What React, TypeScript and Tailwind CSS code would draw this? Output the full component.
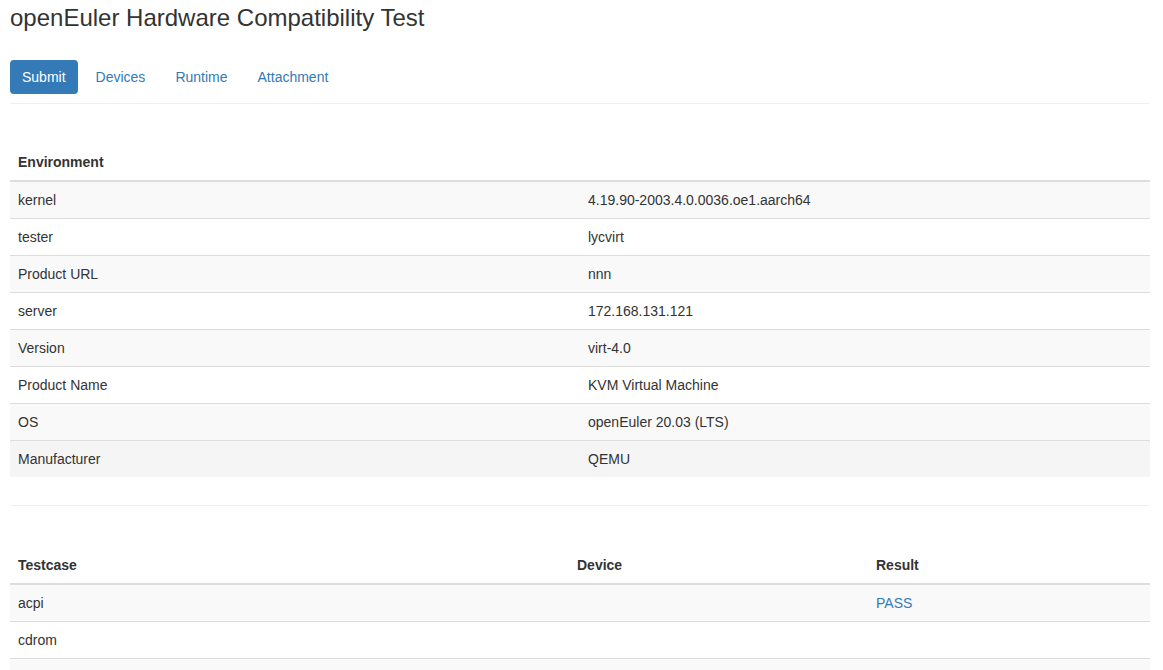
import React from "react";

const env: [string, string][] = [
  ["kernel", "4.19.90-2003.4.0.0036.oe1.aarch64"],
  ["tester", "lycvirt"],
  ["Product URL", "nnn"],
  ["server", "172.168.131.121"],
  ["Version", "virt-4.0"],
  ["Product Name", "KVM Virtual Machine"],
  ["OS", "openEuler 20.03 (LTS)"],
  ["Manufacturer", "QEMU"],
];

function rowBg(i: number, last: boolean) {
  if (last) return "bg-[#f5f5f5]";
  return i % 2 === 0 ? "bg-[#f9f9f9]" : "bg-white";
}

export default function App() {
  return (
    <div
      className="w-[1140px] ml-[10px] text-[14px] leading-[20px] text-[#333]"
      style={{ fontFamily: '"Liberation Sans", Arial, sans-serif' }}
    >
      <h3 className="pt-[5px] text-[24px] leading-[26.4px] font-normal text-[#333]">
        openEuler Hardware Compatibility Test
      </h3>

      <nav className="mt-[29px] flex gap-[6px]">
        <a className="block rounded-[4px] bg-[#337ab7] px-[12px] py-[7px] text-white">Submit</a>
        <a className="block px-[12px] py-[7px] text-[#337ab7]">Devices</a>
        <a className="block px-[12px] py-[7px] text-[#337ab7]">Runtime</a>
        <a className="block px-[12px] py-[7px] text-[#337ab7]">Attachment</a>
      </nav>

      <hr className="mt-[9px] border-0 border-t border-[#eee]" />

      <table className="mt-[40px] w-full border-collapse">
        <thead>
          <tr>
            <th className="border-b-2 border-[#ddd] p-[8px] text-left font-bold" colSpan={2}>
              Environment
            </th>
          </tr>
        </thead>
        <tbody>
          {env.map(([k, v], i) => (
            <tr key={k} className={rowBg(i, i === env.length - 1)}>
              <td className={`w-[570px] p-[8px] ${i === 0 ? "" : "border-t border-[#ddd]"}`}>{k}</td>
              <td className={`p-[8px] ${i === 0 ? "" : "border-t border-[#ddd]"}`}>{v}</td>
            </tr>
          ))}
        </tbody>
      </table>

      <hr className="mt-[28px] border-0 border-t border-[#eee]" />

      <table className="mt-[41px] w-full border-collapse">
        <thead>
          <tr>
            <th className="w-[559px] border-b-2 border-[#ddd] p-[8px] text-left font-bold">Testcase</th>
            <th className="w-[299px] border-b-2 border-[#ddd] p-[8px] text-left font-bold">Device</th>
            <th className="border-b-2 border-[#ddd] p-[8px] text-left font-bold">Result</th>
          </tr>
        </thead>
        <tbody>
          <tr className="bg-[#f9f9f9]">
            <td className="p-[8px]">acpi</td>
            <td className="p-[8px]"></td>
            <td className="p-[8px] text-[#337ab7]">PASS</td>
          </tr>
          <tr className="bg-white">
            <td className="border-t border-[#ddd] p-[8px]">cdrom</td>
            <td className="border-t border-[#ddd] p-[8px]"></td>
            <td className="border-t border-[#ddd] p-[8px]"></td>
          </tr>
          <tr className="bg-[#f9f9f9]">
            <td className="h-[37px] border-t border-[#ddd] p-[8px]"></td>
            <td className="border-t border-[#ddd] p-[8px]"></td>
            <td className="border-t border-[#ddd] p-[8px]"></td>
          </tr>
        </tbody>
      </table>
    </div>
  );
}
